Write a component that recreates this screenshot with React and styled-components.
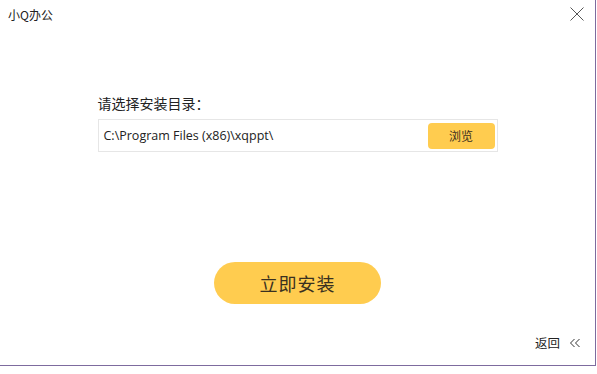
import React from "react";
import styled, { createGlobalStyle } from "styled-components";

const GlobalStyle = createGlobalStyle`
  html, body {
    margin: 0;
    padding: 0;
    background: #fff;
  }
  body {
    font-family: "Noto Sans CJK SC", "Noto Sans", "Liberation Sans", sans-serif;
  }
`;

const Window = styled.div`
  width: 595px;
  height: 365px;
  background: #fff;
  border-right: 1px solid #7d6b9e;
  border-bottom: 1px solid #7d6b9e;
  display: flex;
  flex-direction: column;
  color: #222;
`;

const TitleBar = styled.div`
  height: 30px;
  display: flex;
  align-items: center;
  justify-content: space-between;
  padding: 0 10px 0 8px;
`;

const AppName = styled.span`
  font-size: 12px;
  color: #222;
  margin-top: -2px;
`;

const CloseButton = styled.button`
  border: none;
  background: none;
  padding: 0;
  width: 16px;
  height: 16px;
  display: flex;
  cursor: pointer;
  margin-top: -2px;
`;

const Body = styled.div`
  flex: 1;
  display: flex;
  flex-direction: column;
  align-items: center;
`;

const Field = styled.div`
  width: 400px;
  margin-top: 63px;
`;

const Label = styled.div`
  font-size: 14px;
  line-height: 20px;
  color: #222;
  margin-bottom: 6px;
`;

const InputBox = styled.div`
  height: 31px;
  border: 1px solid #e6e6e6;
  display: flex;
  align-items: center;
  justify-content: space-between;
  padding: 0 2px 0 5px;
`;

const PathText = styled.span`
  font-family: "Open Sans", "Noto Sans", sans-serif;
  font-size: 12.5px;
  color: #222;
`;

const YellowButton = styled.button`
  border: none;
  background: #ffcc4f;
  color: #3a3020;
  cursor: pointer;
  font-family: inherit;
  display: flex;
  align-items: center;
  justify-content: center;
`;

const BrowseButton = styled(YellowButton)`
  width: 67px;
  height: 26px;
  border-radius: 4px;
  font-size: 12px;
`;

const InstallButton = styled(YellowButton)`
  width: 167px;
  height: 42px;
  border-radius: 21px;
  font-size: 18px;
  letter-spacing: 1px;
  margin-top: 110px;
`;

const Footer = styled.div`
  display: flex;
  justify-content: flex-end;
  align-items: center;
  padding: 0 14px 13px 0;
  margin-top: auto;
  gap: 9px;
`;

const BackLink = styled.span`
  font-size: 12.5px;
  color: #222;
`;

export default function App() {
  return (
    <>
      <GlobalStyle />
      <Window>
        <TitleBar>
          <AppName>小Q办公</AppName>
          <CloseButton aria-label="close">
            <svg width="16" height="16" viewBox="0 0 16 16">
              <path d="M1.5 1.5 L14.5 14.5 M14.5 1.5 L1.5 14.5" stroke="#555" strokeWidth="1" fill="none" />
            </svg>
          </CloseButton>
        </TitleBar>
        <Body>
          <Field>
            <Label>请选择安装目录：</Label>
            <InputBox>
              <PathText>C:\Program Files (x86)\xqppt\</PathText>
              <BrowseButton>浏览</BrowseButton>
            </InputBox>
          </Field>
          <InstallButton>立即安装</InstallButton>
        </Body>
        <Footer>
          <BackLink>返回</BackLink>
          <svg width="12" height="10" viewBox="0 0 12 10">
            <path d="M5.5 1 L1.5 5 L5.5 9 M10.5 1 L6.5 5 L10.5 9" stroke="#333" strokeWidth="1" fill="none" />
          </svg>
        </Footer>
      </Window>
    </>
  );
}
